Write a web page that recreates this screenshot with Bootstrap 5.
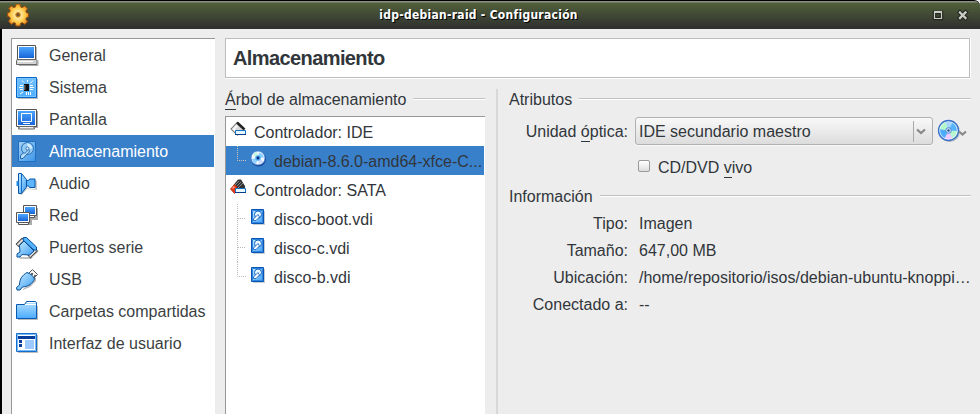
<!DOCTYPE html>
<html lang="es">
<head>
<meta charset="utf-8">
<title>idp-debian-raid - Configuración</title>
<link href="https://cdn.jsdelivr.net/npm/bootstrap@5.3.0/dist/css/bootstrap.min.css" rel="stylesheet">
<style>
body{font:16px/20px "Liberation Sans",Arial,sans-serif;color:#31363b;background:#ededed;height:414px}
svg{display:block;flex:none}
.win{height:414px;border-left:2px solid #000}
.titlebar{height:29px;margin-left:-2px;border-top:1px solid #000;background:linear-gradient(#8b8f84 0 1px,#50603a 2px,#2f302f 27px);border-radius:0 6px 0 0;padding:0 11px 0 7px}
.titlebar h1{font:bold 12px/14px "DejaVu Sans Condensed","DejaVu Sans",sans-serif;font-stretch:condensed;letter-spacing:.27px;color:#fff;text-shadow:1px 1px 0 #000;padding-right:4px}
.content-row{padding-top:9px}
.sections{width:204px;margin-left:9px;border-left:1px solid #989898;border-top:1px solid #989898;height:376px}
.sec{height:32px;padding-left:3px;gap:10px;color:#3b3f43}
.sec span{padding-top:2px}
.sec svg{margin-top:1px}
.sel{background:#3980cb;color:#fff;margin-right:1px}
.main{padding:0 10px 0 10px}
.heading{height:40px;border:1px solid #bdbdbd;box-shadow:0 1px #fff,1px 0 #fff;font:bold 20px/38px "Liberation Sans",Arial,sans-serif;letter-spacing:-.6px;padding-left:7px}
.panes{padding-top:12px}
.left{width:260px}
.right{width:475px;padding-left:11px;border-left:2px solid #d8d8d8;margin:-1px -1px 0 11px;height:325px}
.right .legend>span{padding-top:2px}
.rule{height:2px;background:#c1c1c1;border-bottom:1px solid #fff;margin-left:7px}
.left .rule{margin-top:-2px}
.legend{height:20px}
u{text-decoration:none;box-shadow:0 1px #31363b;display:inline-block;height:19px}
.tree{margin-top:6px;height:299px;border-left:1px solid #989898;border-top:1px solid #989898}
.node{height:29px;padding:2px 0 0 4px}
.node.sel{color:#31363b}
.twig{width:21px;height:29px;margin-top:-2px}
.ctl{margin:-7px -1px 0 0}
.dsk{margin:-6px 0 0 -1px}
.node .cd{margin:-7px -1px 0 -1px}
.optical{margin-top:8px}
.combo{width:298px;height:28px;margin-left:7px;border:1px solid #b1b1b1;border-radius:3px;background:linear-gradient(#f9f9f9,#dcdcdc);box-shadow:0 1px #f7f7f7;padding:0 5px 0 3px}
.combo span{padding-top:1px}
.sep{width:1px;height:21px;background:#aaa}
.lab{width:119px;text-align:right}
.optical .lab{padding-top:2px}
.live{margin:12px 0 9px 129px}
.live span{margin:1px 0 -1px}
.tick{width:12px;height:12px;margin-top:-2px;border:1px solid #999;border-radius:2px;background:linear-gradient(#fff,#ddd)}
.inf{height:27px;gap:11px}
</style>
<script src="https://cdn.jsdelivr.net/npm/bootstrap@5.3.0/dist/js/bootstrap.bundle.min.js"></script>
</head>
<body class="overflow-hidden">
<svg width="0" height="0" class="position-absolute">
<defs>
<linearGradient id="b" x2="0" y2="1"><stop stop-color="#4ba6ff"/><stop offset="1" stop-color="#1765d8"/></linearGradient>
<linearGradient id="c" x2="0" y2="1"><stop stop-color="#b5e2ff"/><stop offset="1" stop-color="#4aaaff"/></linearGradient>
<linearGradient id="h" x2="1" y2="1"><stop stop-color="#c8edff"/><stop offset="1" stop-color="#3b9cf5"/></linearGradient>
<radialGradient id="g"><stop stop-color="#7a4a10"/><stop offset=".3" stop-color="#ffe79a"/><stop offset=".7" stop-color="#ffc846"/><stop offset="1" stop-color="#e8922a"/></radialGradient>
<symbol id="hdd" viewBox="0 0 16 18"><path d="M3 3h12v14H3z" fill="#8b9bb0" opacity=".5"/><path d="M1.500 1.500h12v14h-12z" fill="url(#h)" stroke="#0a55b4"/><path d="M2.500 2.500h10v12h-10z" fill="none" stroke="#2f86e0"/><circle cx="8" cy="6.500" r="3.500" fill="#e7f8ff" stroke="#1667c7"/><path d="M8 6.500 9.500 9 6 12.500H3.500V11z" fill="#fff" stroke="#1667c7" stroke-width=".9"/></symbol>
<symbol id="disc" viewBox="0 0 24 24"><circle cx="12.500" cy="12.500" r="10.500" fill="#7a8494" opacity=".5"/><circle cx="11.500" cy="11.500" r="10" fill="#cfe9ff"/><path d="M11.500 11.500 7 2.500a10 10 0 0 1 9 0z" fill="#a9d6ff"/><path d="M11.500 11.500 16 2.500a10 10 0 0 1 5 11z" fill="#58b4ff"/><path d="M11.500 11.500 21 12a10 10 0 0 1-6 9z" fill="#b6f5cf"/><path d="M11.500 11.500 16 20.500a10 10 0 0 1-9 0z" fill="#efc9ff"/><path d="M11.500 11.500 7 20.500a10 10 0 0 1-5-11z" fill="#4fadff"/><path d="M11.500 11.500 2 10a10 10 0 0 1 6-8z" fill="#b4f7c9"/><circle cx="11.500" cy="11.500" r="9" fill="none" stroke="#fff" stroke-width="1.200" opacity=".8"/><circle cx="11.500" cy="11.500" r="10" fill="none" stroke="#3973c8" stroke-width="1.300"/><circle cx="11.500" cy="11.500" r="2.800" fill="#d4e9ff" stroke="#4c88cc"/><circle cx="11.500" cy="11.500" r="1.200" fill="#244f91"/></symbol>
</defs></svg>
<div class="win">
<header class="titlebar d-flex align-items-center">
<svg width="23" height="23" viewBox="0 0 23 23"><g stroke="#9b4d0b" stroke-width="1" fill="url(#g)" stroke-linejoin="round" transform="translate(0 -1.500)"><path d="M9 1.500h4l.7 3 1.500.6 2.600-1.700 2.700 2.800-1.700 2.500.7 1.500 2 .6v3.600l-2 .7-.7 1.500 1.700 2.600-2.700 2.700-2.600-1.800-1.500.7-.7 2.700H9l-.6-2.700-1.500-.7-2.600 1.800L1.600 18.700l1.700-2.600-.7-1.500-2-.7v-3.600l2-.6.7-1.500-1.700-2.500L4.300 3.400l2.600 1.700 1.500-.6z"/><circle cx="11" cy="12.300" r="2.200" fill="#6f5230" stroke="#d98818"/></g></svg>
<h1 class="m-0 flex-grow-1 text-center">idp-debian-raid - Configuración</h1>
<svg width="38" height="14" viewBox="0 0 38 14"><path d="M3.500 4.500h7v6h-7z" fill="none" stroke="#23281e" stroke-width="3.500"/><path d="M3.500 4.500h7v6h-7z" fill="none" stroke="#c9cdc6" stroke-width="1.200"/><path d="M3 4h8" stroke="#c9cdc6" stroke-width="2"/><path d="m29 4.500 5.500 5.500m0-5.500L29 10" stroke="#23281e" stroke-width="4.500" stroke-linecap="square"/><path d="m29 4.500 5.500 5.500m0-5.500L29 10" stroke="#c9cdc6" stroke-width="2.300" stroke-linecap="square"/></svg>
</header>
<div class="content-row d-flex">
<nav class="sections bg-white flex-shrink-0">
<div class="sec d-flex align-items-center"><svg width="24" height="24"><path d="M4 3h18v14H4z" fill="#bbb"/><path d="M2.500 1.500h18v14h-18z" fill="#fff" stroke="#555"/><path d="M4 3h15v11H4z" fill="url(#b)"/><path d="M2 15.500h19l1 1v4H1.500v-4z" fill="#d4d4d4" stroke="#666"/><path d="M3 17.500h15" stroke="#fff"/><path d="M4 21.500h19v-5" stroke="#aaa" fill="none"/></svg><span>General</span></div>
<div class="sec d-flex align-items-center"><svg width="24" height="24"><path d="M3 3h20v20H3z" fill="#bbb"/><path d="M1.500 1.500h20v20h-20z" fill="url(#c)" stroke="#0767c9"/><path d="M2.500 2.500h18v18h-18z" fill="#53b1ff" fill-opacity=".7" stroke="#77c3ff"/><path d="M5 9.500h3m-4 2h4m-3 2h3m7-4h3m-3 2h4m-4 2h3M7 4.500l2 2M12.500 4v2M18 4.500l-3 3M5 18l3-2m3.500 0v3m2-3v3m2-3v3" stroke="#fff"/><path d="M9 8h5v7H9z" fill="#111"/><path d="M9 9h1.500v5H9z" fill="#666"/></svg><span>Sistema</span></div>
<div class="sec d-flex align-items-center"><svg width="24" height="24"><path d="M3 3h20v17H3z" fill="#aaa"/><path d="M1.500 1.500h20v17h-20z" fill="#fff" stroke="#555"/><path d="M3 3h17v14H3z" fill="url(#b)"/><path d="M6.500 5.500h10v8h-10zM8 15.500h7" fill="none" stroke="#fff"/><path d="M4.500 18.500h14l1 2.500h-16z" fill="#eee" stroke="#666"/></svg><span>Pantalla</span></div>
<div class="sec sel d-flex align-items-center"><svg width="24" height="24" viewBox="0 0 24 24"><path d="M3.500 1.500h17v20h-17z" fill="url(#h)" opacity=".75" stroke="#1768bd"/><circle cx="12.500" cy="8.500" r="6" fill="#94cbf5" stroke="#2870b8"/><path d="M12 3.500a5 5 0 0 1 5 5l-4 0z" fill="#d6efff"/><path d="M12.500 8.500c3 2 2 4-.5 5.500l-4 4.500H5.500v-3l3-2.500c2 .5 4-1 4-4.500z" fill="#b8def7" stroke="#2266aa"/><circle cx="12.500" cy="8.500" r="1.500" fill="#fff" stroke="#2870b8"/></svg><span>Almacenamiento</span></div>
<div class="sec d-flex align-items-center"><svg width="24" height="24"><path d="M5 23 11 16l9 1v-9l2 1v9l-10-1-5 6z" fill="#aaa" opacity=".6"/><path d="M3.500 1.500h3l5 6V15l-5 6.500h-3z" fill="url(#h)" stroke="#0757a8"/><path d="M11.500 8.500h2l1-1.500h5.500v8.500h-5.500l-1-1.500h-2z" fill="#5db5ff" stroke="#0757a8"/><path d="M6.500 2v19" stroke="#126bc5"/><path d="M2.500 9v5" stroke="#238be8" stroke-width="2"/></svg><span>Audio</span></div>
<div class="sec d-flex align-items-center"><svg width="24" height="24"><path d="M10 4h13v12h-6v5H4" fill="#aaa"/><g fill="#fff" stroke="#555"><path d="M8.500 1.500h13v10h-13zM10.500 11.500h9v2h-9zM3.500 18.500h10v2h-10z"/></g><path d="M10 3h10v7H10z" fill="url(#b)"/><path d="M1.500 8.500h13v10h-13z" fill="#fff" stroke="#555"/><path d="M3 10h10v7H3z" fill="url(#b)"/></svg><span>Red</span></div>
<div class="sec d-flex align-items-center"><svg width="24" height="24"><path d="M4 21h14l5-8v3l-7 7H5z" fill="#aaa" opacity=".7"/><path d="M2 9.500 8.500 3M14 21l7.500-7.500" stroke="#444" stroke-width="4"/><path d="M2.500 9 8 3.500m6.500 17 6.500-6.500" stroke="#ddd" stroke-width="2"/><path d="m8.500 1.500 3 0 10 9.500v3l-2.500 0L8 4z" fill="#54b2ff" stroke="#06509b"/><path d="m9 5 10 10-4.500 4-7.500-.5-2 2.500H2v-3l3-2-.5-6.500z" fill="url(#h)" stroke="#06509b"/></svg><span>Puertos serie</span></div>
<div class="sec d-flex align-items-center"><svg width="24" height="24"><path d="m8 21 9-6 4-6v4l-6 6-7 3z" fill="#999" opacity=".7"/><path d="m13 6 4.500-4.500 5 5-4.500 4.500z" fill="#f3f3f3" stroke="#555"/><path d="M16 5h2v2h-2zM19 7h2v2h-2z" fill="#666"/><path d="M12 4.500c3 1 6 3 7.500 6.500-2 4.500-6 7.500-12 8l-2.500 3H2l-.5-2.500L4.500 17c0-6 3-10 7.500-12.500z" fill="url(#h)" stroke="#06509b"/></svg><span>USB</span></div>
<div class="sec d-flex align-items-center"><svg width="24" height="24"><path d="M3 6h20v14H3z" fill="#bbb"/><path d="M1.500 4.500h8l2-3h9l1 1v16h-20z" fill="url(#c)" stroke="#075bb5"/><path d="M10 4.500h11M12 2.500h8" stroke="#fff"/></svg><span>Carpetas compartidas</span></div>
<div class="sec d-flex align-items-center"><svg width="24" height="24"><path d="M3 3h20v18H3z" fill="#bbb"/><path d="M1.500 1.500h20v18h-20z" fill="#fff" stroke="#166dcc"/><path d="M2.500 2.500h18v16h-18z" fill="none" stroke="#73bbff"/><path d="M3 4h17v3H3zM4 8h3v3H4zM4 12h3v3H4z" fill="#073e9c"/><path d="M10 8h9v9h-9z" fill="#9cc9ff"/></svg><span>Interfaz de usuario</span></div>
</nav>
<main class="main flex-grow-1">
<div class="heading bg-white">Almacenamiento</div>
<div class="panes d-flex">
<section class="left flex-shrink-0">
<div class="legend d-flex align-items-center"><span><u>Á</u>rbol de almacenamiento</span><div class="rule flex-grow-1"></div></div>
<div class="tree bg-white">
<div class="node d-flex align-items-center"><svg class="ctl" width="17" height="17"><path d="m7.500 1-7 7 7 7L15 9z" fill="#d9d9d9"/><path d="m7.500 1-6.700 7 6.700 6.500" fill="none" stroke="#666"/><path d="m7 1.500 7.500 7" stroke="#222" stroke-width="2.500"/><path d="M7.500 4.500 4 8l3.500 3.500" fill="none" stroke="#fff" stroke-width="1.500"/><path d="M5.500 9.500h10v4h-10z" fill="#e8f8ff" stroke="#1370c9"/><path d="M5 13.500h11" stroke="#083d8c"/></svg><span class="ps-2">Controlador: IDE</span></div>
<div class="node sel d-flex align-items-center"><svg class="twig"><path d="M7.500 0v14.500H16" fill="none" stroke="#d2c5b5" stroke-dasharray="1 1"/></svg><svg class="dsk cd" width="17" height="17"><circle cx="8.500" cy="9" r="7.500" fill="#16479c"/><circle cx="8" cy="8" r="7" fill="#f2faff" stroke="#3c78c8" stroke-width=".7"/><path d="M8 8 9 2.500a6 6 0 0 1 5 5zM8 8 2 9a6 6 0 0 0 4 5z" fill="#8fd0ff"/><path d="M8 8 3 5a6 6 0 0 1 4-3z" fill="#c5f7d9"/><path d="M8 8 9 14a6 6 0 0 0 4-3z" fill="#c9d8ff"/><circle cx="8" cy="8" r="2.800" fill="#52aef7"/><circle cx="8" cy="8" r="1.400" fill="#0c2f78"/></svg><span class="ps-2">debian-8.6.0-amd64-xfce-C...</span></div>
<div class="node d-flex align-items-center"><svg class="ctl" width="17" height="17"><path d="M8 .5h3l4 6.500v4H5L3.500 6z" fill="#333"/><path d="m5 6 4-4m-3 6 5-5m-3 6 5-5" stroke="#888"/><path d="m.5 10 4-4.500L7 8v4l-2.500 2.500z" fill="#e83a18" stroke="#a92a10" stroke-width=".8"/><path d="m2.500 9.500 2-2" stroke="#ff9d78" stroke-width="1.500"/><path d="M5.500 9.500h10v4h-10z" fill="#e8f8ff" stroke="#1370c9"/><path d="M5 13.500h11" stroke="#083d8c"/></svg><span class="ps-2">Controlador: SATA</span></div>
<div class="node d-flex align-items-center"><svg class="twig"><path d="M7.500 0v29M8 14.500h8" fill="none" stroke="#bbb" stroke-dasharray="1 1"/></svg><svg class="dsk" width="16" height="18"><use href="#hdd"/></svg><span class="ps-2">disco-boot.vdi</span></div>
<div class="node d-flex align-items-center"><svg class="twig"><path d="M7.500 0v29M8 14.500h8" fill="none" stroke="#bbb" stroke-dasharray="1 1"/></svg><svg class="dsk" width="16" height="18"><use href="#hdd"/></svg><span class="ps-2">disco-c.vdi</span></div>
<div class="node d-flex align-items-center"><svg class="twig"><path d="M7.500 0v14.500H16" fill="none" stroke="#bbb" stroke-dasharray="1 1"/></svg><svg class="dsk" width="16" height="18"><use href="#hdd"/></svg><span class="ps-2">disco-b.vdi</span></div>
</div>
</section>
<section class="right flex-shrink-0">
<div class="legend d-flex align-items-center"><span>Atributos</span><div class="rule flex-grow-1"></div></div>
<div class="optical d-flex align-items-center"><span class="lab">Unidad <u>ó</u>ptica:</span><div class="combo d-flex align-items-center"><span class="flex-grow-1">IDE secundario maestro</span><div class="sep"></div><svg width="13" height="12"><path d="m3 4.500 4 3.500 4-3.500" fill="none" stroke="#888" stroke-width="2.200"/></svg></div>
<svg width="34" height="24" class="ms-1"><use href="#disc" width="24" height="24"/><path d="m22 12.500 3.500 3 3.500-3" fill="none" stroke="#888" stroke-width="2.200"/></svg></div>
<div class="live d-flex align-items-center"><div class="tick"></div><span class="ps-2">CD/DVD <u>v</u>ivo</span></div>
<div class="legend d-flex align-items-center"><span>Información</span><div class="rule flex-grow-1"></div></div>
<div class="pt-1">
<div class="inf d-flex align-items-center"><span class="lab">Tipo:</span><span>Imagen</span></div>
<div class="inf d-flex align-items-center"><span class="lab">Tamaño:</span><span>647,00 MB</span></div>
<div class="inf d-flex align-items-center"><span class="lab">Ubicación:</span><span class="text-nowrap">/home/repositorio/isos/debian-ubuntu-knoppi…</span></div>
<div class="inf d-flex align-items-center"><span class="lab">Conectado a:</span><span>--</span></div>
</div>
</section>
</div>
</main>
</div>
</div>
</body>
</html>
